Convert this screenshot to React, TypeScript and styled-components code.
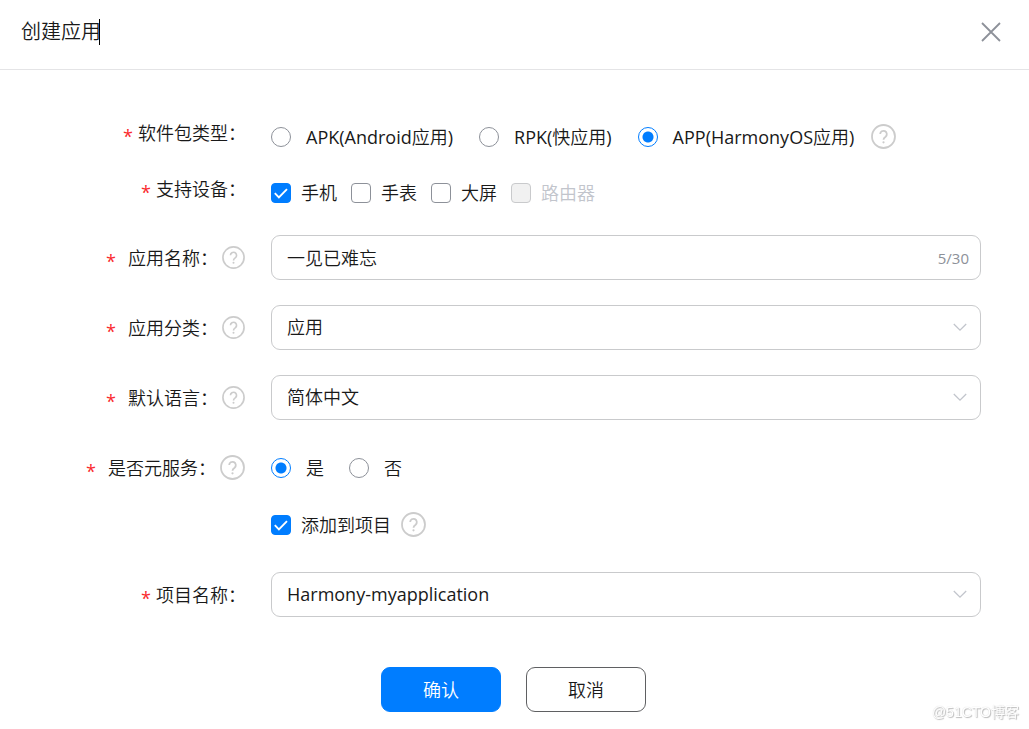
import React, { useState } from "react";
import type { ReactNode } from "react";
import styled, { createGlobalStyle } from "styled-components";

const ink = "#191919";
const blue = "#007dff";
const line = "#c9cacc";

const GlobalStyle = createGlobalStyle`
  *, *::before, *::after { box-sizing: border-box; }
  body {
    margin: 0;
    background: #fff;
    color: ${ink};
    font: 400 18px/26px "Open Sans", "Noto Sans CJK SC DemiLight", "Noto Sans CJK SC Light", "Noto Sans CJK SC", sans-serif;
  }
  button, input, select { font: inherit; color: inherit; }
`;

const Dialog = styled.main`
  min-height: 100vh;
  background: #fff;
`;

const Header = styled.header`
  display: flex;
  align-items: center;
  justify-content: space-between;
  height: 70px;
  padding: 0 28px 6px 21px;
  border-bottom: 1px solid #e4e4e6;
`;

const Title = styled.h1`
  display: flex;
  align-items: center;
  margin: 0;
  font-size: 20px;
  font-weight: 400;
  line-height: 26px;
`;

const Caret = styled.span`
  width: 1px;
  height: 26px;
  margin-left: -2px;
  background: #000;
`;

const CloseButton = styled.button`
  display: flex;
  padding: 0;
  border: 0;
  background: none;
  cursor: pointer;
`;

const Form = styled.form`
  padding: 44px 48px 17px 0;
`;

const Row = styled.div<{ $gap: number }>`
  display: grid;
  grid-template-columns: 246px minmax(0, 1fr);
  column-gap: 25px;
  align-items: center;
  min-height: 45px;
  margin-bottom: ${(p) => p.$gap}px;
`;

const LabelCell = styled.div<{ $raised?: boolean }>`
  display: flex;
  align-items: center;
  justify-content: flex-end;
  padding-bottom: ${(p) => (p.$raised ? 7 : 0)}px;
  white-space: nowrap;
`;

const Star = styled.span<{ $wide?: boolean }>`
  margin-right: ${(p) => (p.$wide ? 12 : 5)}px;
  padding-top: 6px;
  color: #fa2a2d;
`;

const HelpButton = styled.button`
  display: flex;
  flex: none;
  padding: 0;
  border: 0;
  background: none;
  cursor: help;
`;

const LabelHelp = styled.span`
  margin: 0 1px 0 4px;
`;

const Options = styled.div<{ $gap: number }>`
  display: flex;
  align-items: center;
  column-gap: ${(p) => p.$gap}px;
  white-space: nowrap;
`;

const Choice = styled.label<{ $gap: number; $disabled?: boolean }>`
  display: flex;
  align-items: center;
  gap: ${(p) => p.$gap}px;
  color: ${(p) => (p.$disabled ? "#c2c5cc" : ink)};
`;

const Radio = styled.input.attrs({ type: "radio" })`
  appearance: none;
  flex: none;
  width: 20px;
  height: 20px;
  margin: 0;
  border: 1px solid #8d9199;
  border-radius: 50%;
  background: #fff;
  &:checked {
    border-color: ${blue};
    background: radial-gradient(circle, ${blue} 5px, #fff 6px);
  }
`;

const Tick = styled.input.attrs({ type: "checkbox" })`
  appearance: none;
  flex: none;
  grid-area: 1 / 1;
  width: 20px;
  height: 20px;
  margin: 0;
  border: 1px solid #8d9199;
  border-radius: 4px;
  background: #fff;
  &:checked { border-color: ${blue}; background: ${blue}; }
  &:disabled { border-color: ${line}; background: #f1f1f1; }
`;

const TickBox = styled.span`
  display: grid;
  svg { grid-area: 1 / 1; pointer-events: none; z-index: 1; }
`;

const Field = styled.div`
  display: grid;
  grid-template-columns: minmax(0, 1fr);
  align-items: center;
  > * { grid-area: 1 / 1; }
  > svg { justify-self: end; margin-right: 14px; pointer-events: none; }
`;

const TextInput = styled.input`
  width: 100%;
  height: 45px;
  padding: 0 70px 2px 15px;
  border: 1px solid ${line};
  border-radius: 9px;
  background: #fff;
  outline: none;
`;

const Select = styled.select`
  appearance: none;
  width: 100%;
  height: 45px;
  padding: 0 40px 2px 15px;
  border: 1px solid ${line};
  border-radius: 9px;
  background: #fff;
  outline: none;
`;

const Counter = styled.span`
  justify-self: end;
  margin-right: 12px;
  color: #8d9199;
  font-size: 15px;
  pointer-events: none;
`;

const Actions = styled.div`
  display: flex;
  justify-content: center;
  gap: 25px;
  margin: 50px -46px 0 0;
`;

const ActionButton = styled.button<{ $primary?: boolean }>`
  width: 120px;
  height: 45px;
  padding: 0;
  border: 1px solid ${(p) => (p.$primary ? blue : "#5f6062")};
  border-radius: 9px;
  background: ${(p) => (p.$primary ? blue : "#fff")};
  color: ${(p) => (p.$primary ? "#fff" : ink)};
  cursor: pointer;
`;

const Watermark = styled.div`
  position: fixed;
  right: 10px;
  bottom: 7px;
  color: #fff;
  font: 400 14px/20px "Liberation Sans", "Noto Sans CJK SC", sans-serif;
  text-shadow: 1px 1px 1px #bbb, 0 0 1px #ccc;
`;

function Help({ size = 25, about }: { size?: number; about: string }) {
  return (
    <HelpButton type="button" aria-label={about}>
      <svg width={size} height={size} viewBox="0 0 25 25" fill="none" stroke="#ccc">
        <circle cx="12.5" cy="12.5" r="11.5" strokeWidth="1.8" />
        <path d="M9.2 10.1a3.3 3.3 0 1 1 5.4 2.6c-1.4 1-2.1 1.5-2.1 3.1" strokeWidth="1.8" />
        <circle cx="12.5" cy="18.3" r="1.1" fill="#ccc" stroke="none" />
      </svg>
    </HelpButton>
  );
}

function Chevron() {
  return (
    <svg width="14" height="9" viewBox="0 0 14 9" fill="none" stroke="#c2c5cc" strokeWidth="1.3">
      <path d="M.8 1 7 7.2 13.2 1" />
    </svg>
  );
}

function Checkbox(props: { label: string; checked?: boolean; disabled?: boolean }) {
  const [on, setOn] = useState(!!props.checked);
  return (
    <Choice $gap={10} $disabled={props.disabled}>
      <TickBox>
        <Tick checked={on} disabled={props.disabled} onChange={(e) => setOn(e.target.checked)} />
        {on && (
          <svg width="20" height="20" viewBox="0 0 20 20" fill="none" stroke="#fff" strokeWidth="1.9">
            <path d="m3.8 10.2 4.1 4.1 8.1-8.1" />
          </svg>
        )}
      </TickBox>
      {props.label}
    </Choice>
  );
}

function RadioChoice(props: { name: string; label: string; checked?: boolean }) {
  return (
    <Choice $gap={15}>
      <Radio name={props.name} defaultChecked={props.checked} />
      {props.label}
    </Choice>
  );
}

function FormRow(props: {
  id: string;
  label: string;
  gap: number;
  field?: boolean;
  raised?: boolean;
  helpSize?: number;
  children: ReactNode;
}) {
  const text = props.label + "：";
  return (
    <Row
      $gap={props.gap}
      role={props.field ? undefined : "group"}
      aria-labelledby={props.field ? undefined : props.id + "-label"}
    >
      <LabelCell $raised={props.raised}>
        <Star $wide={!!props.helpSize}>*</Star>
        {props.field ? <label htmlFor={props.id}>{text}</label> : <span id={props.id + "-label"}>{text}</span>}
        {props.helpSize && (
          <LabelHelp>
            <Help size={props.helpSize} about={props.label + "说明"} />
          </LabelHelp>
        )}
      </LabelCell>
      {props.children}
    </Row>
  );
}

function SelectField({ id, value }: { id: string; value: string }) {
  return (
    <Field>
      <Select id={id} defaultValue={value}>
        <option>{value}</option>
      </Select>
      <Chevron />
    </Field>
  );
}

export default function App() {
  const [name, setName] = useState("一见已难忘");
  return (
    <Dialog>
      <GlobalStyle />
      <Header>
        <Title>
          创建应用
          <Caret />
        </Title>
        <CloseButton type="button" aria-label="关闭">
          <svg width="20" height="20" viewBox="0 0 20 20" fill="none" stroke="#8d9199" strokeWidth="1.8">
            <path d="m1 1 18 18M19 1 1 19" />
          </svg>
        </CloseButton>
      </Header>
      <Form onSubmit={(e) => e.preventDefault()}>
        <FormRow id="package" label="软件包类型" gap={11} raised>
          <Options $gap={26}>
            <RadioChoice name="package" label="APK(Android应用)" />
            <RadioChoice name="package" label="RPK(快应用)" />
            <Options $gap={17}>
              <RadioChoice name="package" label="APP(HarmonyOS应用)" checked />
              <Help about="软件包类型说明" />
            </Options>
          </Options>
        </FormRow>
        <FormRow id="device" label="支持设备" gap={20} raised>
          <Options $gap={14}>
            <Checkbox label="手机" checked />
            <Checkbox label="手表" />
            <Checkbox label="大屏" />
            <Checkbox label="路由器" disabled />
          </Options>
        </FormRow>
        <FormRow id="app-name" label="应用名称" gap={25} field helpSize={23}>
          <Field>
            <TextInput id="app-name" value={name} maxLength={30} onChange={(e) => setName(e.target.value)} />
            <Counter>{name.length}/30</Counter>
          </Field>
        </FormRow>
        <FormRow id="category" label="应用分类" gap={25} field helpSize={23}>
          <SelectField id="category" value="应用" />
        </FormRow>
        <FormRow id="language" label="默认语言" gap={25} field helpSize={23}>
          <SelectField id="language" value="简体中文" />
        </FormRow>
        <FormRow id="service" label="是否元服务" gap={12} helpSize={25}>
          <Options $gap={25}>
            <RadioChoice name="service" label="是" checked />
            <RadioChoice name="service" label="否" />
          </Options>
        </FormRow>
        <Row $gap={25}>
          <span />
          <Options $gap={10}>
            <Checkbox label="添加到项目" checked />
            <Help about="添加到项目说明" />
          </Options>
        </Row>
        <FormRow id="project" label="项目名称" gap={0} field>
          <SelectField id="project" value="Harmony-myapplication" />
        </FormRow>
        <Actions>
          <ActionButton type="submit" $primary>确认</ActionButton>
          <ActionButton type="button">取消</ActionButton>
        </Actions>
      </Form>
      <Watermark>@51CTO博客</Watermark>
    </Dialog>
  );
}
